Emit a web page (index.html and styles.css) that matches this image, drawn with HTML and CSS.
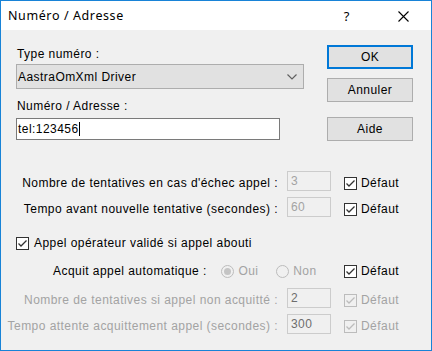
FILE: index.html
```html
<!DOCTYPE html>
<html lang="fr">
<head>
  <meta charset="UTF-8" />
  <title>Numéro / Adresse</title>
  <link rel="stylesheet" href="styles.css">
</head>
<body>

  <div class="window">
    <div class="titlebar">
      <span class="title">Numéro / Adresse</span>
      <span class="cap-help">?</span>
      <span class="cap-close">
        <svg width="11" height="11" viewBox="0 0 11 11"><path d="M0.5 0.5 L10.5 10.5 M10.5 0.5 L0.5 10.5" stroke="#000" stroke-width="1.1" fill="none"/></svg>
      </span>
    </div>

    <div class="content">
      <div class="top">
        <div class="fields">
          <div class="lbl">Type numéro :</div>
          <div class="combo">
            <span>AastraOmXml Driver</span>
            <svg width="10" height="6" viewBox="0 0 10 6"><path d="M0.5 0.5 L5 5 L9.5 0.5" stroke="#606060" stroke-width="1.2" fill="none"/></svg>
          </div>
          <div class="lbl lbl-2">Numéro / Adresse :</div>
          <div class="edit">tel:123456<span class="caret"></span></div>
        </div>
        <div class="actions">
          <button class="btn btn-default">OK</button>
          <button class="btn">Annuler</button>
          <button class="btn btn-help">Aide</button>
        </div>
      </div>

      <div class="rows">
        <div class="row r1">
          <div class="row-lbl">Nombre de tentatives en cas d'échec appel :</div>
          <div class="num num-light">3</div>
          <div class="chk-wrap"><span class="chk on"></span>Défaut</div>
        </div>
        <div class="row r2">
          <div class="row-lbl">Tempo avant nouvelle tentative (secondes) :</div>
          <div class="num num-light">60</div>
          <div class="chk-wrap"><span class="chk on"></span>Défaut</div>
        </div>
        <div class="row r3">
          <div class="full"><span class="chk on"></span>Appel opérateur validé si appel abouti</div>
        </div>
        <div class="row r4">
          <div class="acquit">
            <span class="acquit-lbl">Acquit appel automatique :</span>
            <span class="radio-item"><span class="radio sel"></span>Oui</span>
            <span class="radio-item"><span class="radio"></span>Non</span>
          </div>
          <div class="chk-wrap"><span class="chk on"></span>Défaut</div>
        </div>
        <div class="row r5 disabled">
          <div class="row-lbl">Nombre de tentatives si appel non acquitté :</div>
          <div class="num">2</div>
          <div class="chk-wrap"><span class="chk on off"></span>Défaut</div>
        </div>
        <div class="row r6 disabled">
          <div class="row-lbl">Tempo attente acquittement appel (secondes) :</div>
          <div class="num">300</div>
          <div class="chk-wrap"><span class="chk on off"></span>Défaut</div>
        </div>
      </div>
    </div>
  </div>

</body>
</html>
```

FILE: styles.css
```css
* {
  box-sizing: border-box;
}

body {
  margin: 0;
  font-family: 'Liberation Sans', Arial, sans-serif;
  font-size: 12px;
  letter-spacing: 0.45px;
  color: #000;
  background: #fff;
}

.window {
  width: 432px;
  height: 351px;
  border: 1px solid #1883d7;
  background: #f0f0f0;
  display: flex;
  flex-direction: column;
}

/* title bar */
.titlebar {
  height: 29px;
  background: #fff;
  display: flex;
  align-items: center;
  padding-left: 7px;
  letter-spacing: 0;
}

.title {
  flex: 1;
  font-family: 'Noto Sans', sans-serif;
  font-size: 12.5px;
  letter-spacing: 0.6px;
}

.cap-help {
  width: 54px;
  text-align: center;
  font-family: 'Noto Sans', sans-serif;
  font-size: 13px;
  padding-right: 3px;
}

.cap-close {
  width: 56px;
  display: flex;
  justify-content: center;
  padding-top: 1px;
}

/* upper part */
.top {
  display: flex;
  justify-content: space-between;
  align-items: flex-start;
  padding: 15px 18px 0 15px;
}

.fields {
  width: 288px;
  margin-top: 2px;
}

.lbl {
  line-height: 13px;
  padding-left: 1px;
  padding-top: 1px;
}

.lbl-2 {
  margin-top: 10px;
}

.combo {
  margin-top: 3px;
  height: 25px;
  background: #e1e1e1;
  border: 1px solid #adadad;
  display: flex;
  align-items: center;
  justify-content: space-between;
  padding: 0 6px 0 1px;
}

.edit {
  margin-top: 5px;
  width: 264px;
  height: 22px;
  background: #fff;
  border: 1px solid #7a7a7a;
  display: flex;
  align-items: center;
  padding-left: 1px;
}

.caret {
  display: inline-block;
  width: 1px;
  height: 14px;
  background: #000;
}

.actions {
  display: flex;
  flex-direction: column;
  width: 86px;
}

.btn {
  height: 24px;
  font-family: 'Liberation Sans', Arial, sans-serif;
  font-size: 12px;
  letter-spacing: 0.45px;
  color: #000;
  background: #e1e1e1;
  border: 1px solid #adadad;
  padding: 0;
  margin-bottom: 9px;
}

.btn-default {
  border-color: #0078d7;
  box-shadow: inset 0 0 0 1px #0078d7;
}

.btn-help {
  margin-top: 6px;
}

/* lower part */
.rows {
  margin-top: 23px;
}

.row {
  display: grid;
  grid-template-columns: 279px 44px 1fr;
  column-gap: 7px;
  align-items: center;
  height: 20px;
}

.r2 { margin-top: 6px; }
.r3 { margin-top: 14px; }
.r4 { margin-top: 8px; }
.r5 { margin-top: 9px; }
.r6 { margin-top: 6px; }

.row-lbl {
  text-align: right;
  padding-right: 2px;
  white-space: nowrap;
}

.num {
  height: 20px;
  margin: -2px 0 2px;
  border: 1px solid #cccccc;
  background: #f0f0f0;
  color: #6d6d6d;
  padding: 2px 0 0 3px;
}

.num-light {
  color: #a3a3a3;
}

.chk-wrap {
  display: flex;
  align-items: center;
  padding-left: 6px;
}

.chk {
  width: 13px;
  height: 13px;
  border: 1px solid #333;
  background: #fff;
  margin-right: 4px;
  flex: none;
}

.chk.on {
  background: #fff url("data:image/svg+xml,%3Csvg xmlns='http://www.w3.org/2000/svg' width='11' height='11'%3E%3Cpath d='M1.5 5.5 L4 8 L9.5 2.5' stroke='%23333' stroke-width='1.3' fill='none'/%3E%3C/svg%3E") no-repeat center;
}

.chk.off {
  border-color: #bcbcbc;
  background: #f0f0f0 url("data:image/svg+xml,%3Csvg xmlns='http://www.w3.org/2000/svg' width='11' height='11'%3E%3Cpath d='M1.5 5.5 L4 8 L9.5 2.5' stroke='%23bcbcbc' stroke-width='1.3' fill='none'/%3E%3C/svg%3E") no-repeat center;
}

.full {
  grid-column: 1 / -1;
  display: flex;
  align-items: center;
  padding-left: 15px;
}

.full .chk {
  margin-right: 5px;
}

.acquit {
  grid-column: 1 / 3;
  display: flex;
  align-items: center;
  padding-left: 52px;
}

.acquit-lbl {
  width: 169px;
}

.radio-item {
  display: flex;
  align-items: center;
  width: 55px;
  color: #a3a3a3;
}

.radio {
  width: 13px;
  height: 13px;
  border: 1px solid #bcbcbc;
  border-radius: 50%;
  background: #f0f0f0;
  margin-right: 4px;
  display: flex;
  align-items: center;
  justify-content: center;
}

.radio.sel::after {
  content: "";
  width: 7px;
  height: 7px;
  border-radius: 50%;
  background: #c4c4c4;
}

.disabled .row-lbl,
.disabled .chk-wrap {
  color: #a3a3a3;
}
```
